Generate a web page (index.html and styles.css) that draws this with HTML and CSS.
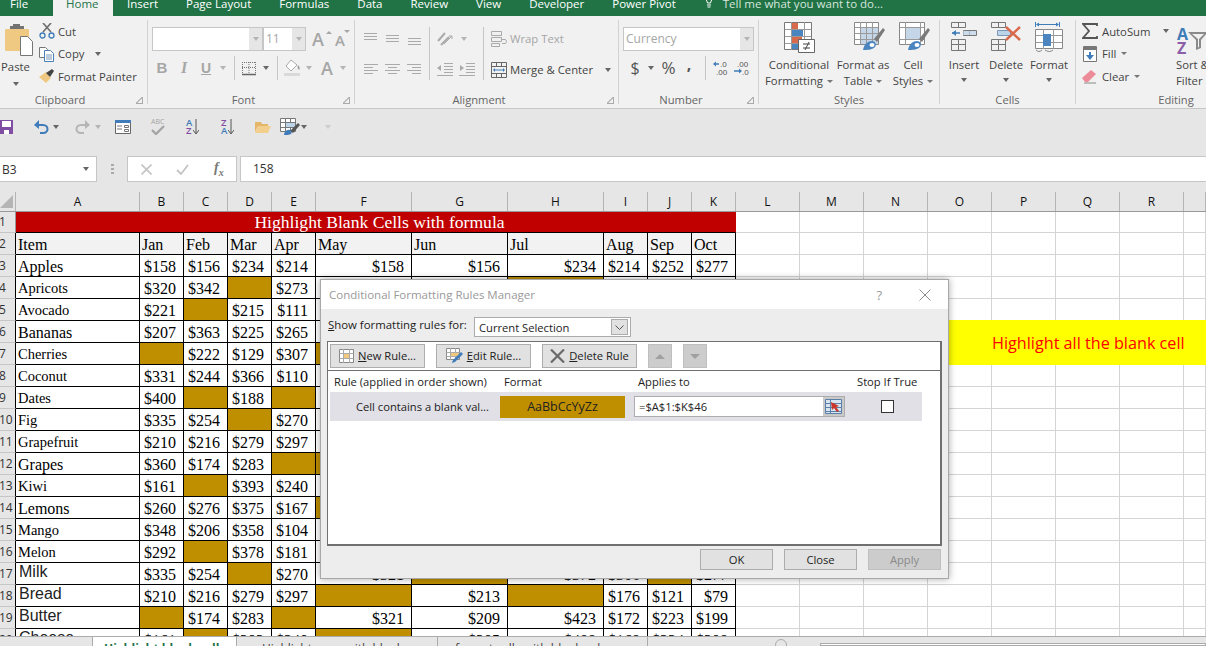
FILE: index.html
```html
<!DOCTYPE html>
<html lang="en">
<head>
<meta charset="UTF-8">
<title>Highlight Blank Cells</title>
<link rel="stylesheet" href="styles.css">
</head>
<body>
<div class="app">
  <!-- tabs -->
  <div class="tabs">
    <span class="tab file">File</span>
    <span class="tab home">Home</span>
    <span class="tab">Insert</span>
    <span class="tab">Page Layout</span>
    <span class="tab">Formulas</span>
    <span class="tab">Data</span>
    <span class="tab">Review</span>
    <span class="tab">View</span>
    <span class="tab">Developer</span>
    <span class="tab">Power Pivot</span>
    <span class="tell">
      <svg width="12" height="16" viewBox="0 0 12 16"><path d="M2 0c0 3 2 4 2.500 7h3C8 4 10 3 10 0M4 9h4M4.500 11h3" fill="none" stroke="#fff"/></svg>
      Tell me what you want to do...
    </span>
  </div>

  <!-- ribbon -->
  <div class="ribbon">
    <div class="grp g-clip">
      <div class="body clip-body">
        <div class="paste">
          <svg width="32" height="33" viewBox="0 0 32 33"><rect x="3" y="6" width="24" height="22" rx="1" fill="#efc981"/><path d="M8 6V3h3V1h7v2h4v3z" fill="#737373"/><path d="M18.500 13.500h7l5 5v14h-12z" fill="#fff" stroke="#767676"/></svg>
          <span class="paste-t">Paste</span>
          <span class="caret"></span>
        </div>
        <div class="clip-rows">
          <div class="clip-row">
            <svg width="16" height="16" viewBox="0 0 16 16"><path d="M4 9 12 0M12 9 4 0" stroke="#6d6d6d" stroke-width="1.600" fill="none"/><circle cx="3.500" cy="12.500" r="2.500" fill="none" stroke="#3f7cb9" stroke-width="1.300"/><circle cx="12.500" cy="12.500" r="2.500" fill="none" stroke="#3f7cb9" stroke-width="1.300"/></svg>
            Cut
          </div>
          <div class="clip-row">
            <svg width="16" height="16" viewBox="0 0 16 16"><path d="M.5 1.500h6l2 2v8h-8z" fill="#fff" stroke="#777"/><path d="M5.500 4.500h6l3 3v8h-9z" fill="#fff" stroke="#4a7fb5"/><path d="M7 9h6M7 11h6M7 13h6" stroke="#7a98b8"/></svg>
            Copy <span class="caret copy-c"></span>
          </div>
          <div class="clip-row">
            <svg width="16" height="16" viewBox="0 0 16 16"><path d="M0 9 7 4l5 6-5 5z" fill="#efc981"/><path d="M7 5 13 1l2 2-4 6z" fill="#444"/></svg>
            Format Painter
          </div>
        </div>
      </div>
      <div class="glabel"><span>Clipboard</span><i class="launch"></i></div>
    </div>

    <div class="grp g-font">
      <div class="body two">
        <div class="r1">
          <div class="combo c-name"><b></b></div>
          <div class="combo c-size"><em>11</em><b></b></div>
          <span class="grow big-a">A<i class="up"></i></span>
          <span class="grow small-a">A<i class="dn"></i></span>
        </div>
        <div class="r2 font-r2">
          <span class="gl bold">B</span>
          <span class="gl ital">I</span>
          <span class="gl und">U</span>
          <span class="caret off"></span>
          <span class="sep"></span>
          <svg width="14" height="15" viewBox="0 0 14 15"><path d="M.5 1v11M7 1v11M13.500 1v11M0 1.500h14M0 6.500h14" stroke="#777" stroke-dasharray="1 1" fill="none"/><path d="M0 13.500h14" stroke="#666" stroke-width="1.500"/></svg>
          <span class="caret"></span>
          <span class="sep"></span>
          <svg width="16" height="18" viewBox="0 0 16 18"><path d="M7 1 2 7l5 5 6-6z" fill="#fff" stroke="#aaa"/><path d="M14 6c2 2 2 4 1 5-1-1-2-3-1-5z" fill="#999"/><path d="M0 14h16v3H0z" fill="#d9d9d9"/></svg>
          <span class="caret off"></span>
          <span class="gl big-gl">A</span>
          <span class="caret off"></span>
        </div>
      </div>
      <div class="glabel"><span>Font</span><i class="launch"></i></div>
    </div>

    <div class="grp g-align">
      <div class="body two align-body">
        <div class="al-col">
          <div class="al-row">
            <svg class="ln" width="15" height="12" viewBox="0 0 15 12"><path d="M1 .5h13M1 3.500h13M1 6.500h13" stroke="#aaa"/></svg>
            <svg class="ln" width="15" height="12" viewBox="0 0 15 12"><path d="M1 2.500h13M1 5.500h13M1 8.500h13" stroke="#aaa"/></svg>
            <svg class="ln" width="15" height="12" viewBox="0 0 15 12"><path d="M1 5.500h13M1 8.500h13M1 11.500h13" stroke="#aaa"/></svg>
          </div>
          <div class="al-row">
            <svg class="ln" width="15" height="12" viewBox="0 0 15 12"><path d="M1 .5h14M1 3.500h9M1 6.500h14M1 9.500h9" stroke="#aaa"/></svg>
            <svg class="ln" width="15" height="12" viewBox="0 0 15 12"><path d="M0 .5h15M3 3.500h9M0 6.500h15M3 9.500h9" stroke="#aaa"/></svg>
            <svg class="ln" width="15" height="12" viewBox="0 0 15 12"><path d="M0 .5h14M5 3.500h9M0 6.500h14M5 9.500h9" stroke="#aaa"/></svg>
          </div>
        </div>
        <span class="vsep"></span>
        <div class="al-col al-mid">
          <div class="al-row">
            <svg width="17" height="16" viewBox="0 0 17 16"><path d="M1 10 8 2M4 14l8-8" stroke="#aaa" stroke-width="2" fill="none"/><path d="M7 13 15 5M15 5h-3M15 5v3" stroke="#aaa" fill="none"/></svg>
            <span class="caret off"></span>
          </div>
          <div class="al-row ind">
            <svg width="16" height="13" viewBox="0 0 16 13"><path d="M7 .5h9M7 3.500h9M7 6.500h9M7 9.500h9M0 12.500h16" stroke="#aaa"/><path d="M0 5l4-3v6z" fill="#aaa"/></svg>
            <svg width="16" height="13" viewBox="0 0 16 13"><path d="M7 .5h9M7 3.500h9M7 6.500h9M7 9.500h9M0 12.500h16" stroke="#aaa"/><path d="M5 5 1 2v6z" fill="#aaa"/></svg>
          </div>
        </div>
        <span class="vsep"></span>
        <div class="al-col al-wrap">
          <div class="al-row off-t">
            <svg width="16" height="16" viewBox="0 0 16 16"><path d="M.5.500h10v4H.5zM.5 6.500h10v4H.5zM.5 12.500h8v3H.5zM11 8.500h3c2 0 2 4 0 4h-3" fill="none" stroke="#aaa"/></svg>
            Wrap Text
          </div>
          <div class="al-row">
            <svg width="16" height="16" viewBox="0 0 16 16"><path d="M.5.500h15v15H.5zM0 4.500h16M0 11.500h16M5.500 0v4M10.500 0v4M5.500 12v4M10.500 12v4" fill="none" stroke="#666"/><path d="M3 8h10" stroke="#3f7cb9"/><path d="M2 8l2-2v4zM14 8l-2-2v4z" fill="#3f7cb9"/></svg>
            Merge &amp; Center <span class="caret merge-c"></span>
          </div>
        </div>
      </div>
      <div class="glabel"><span>Alignment</span><i class="launch"></i></div>
    </div>

    <div class="grp g-num">
      <div class="body two">
        <div class="r1"><div class="combo c-cur"><em>Currency</em><b></b></div></div>
        <div class="r2 num-r2">
          <span class="dollar">$</span>
          <span class="caret"></span>
          <span class="pct">%</span>
          <span class="comma">,</span>
          <span class="sep"></span>
          <svg width="15" height="14" viewBox="0 0 15 14"><path d="M6 3H1" stroke="#3f7cb9" stroke-width="1.500"/><path d="M0 3l3-2.500v5z" fill="#3f7cb9"/><text x="7" y="6" class="dec">.0</text><text x="3" y="13.500" class="dec">.00</text></svg>
          <svg width="15" height="14" viewBox="0 0 15 14"><text x="3" y="6" class="dec">.00</text><path d="M0 10h6" stroke="#3f7cb9" stroke-width="1.500"/><path d="M8 10 5 7.500v5z" fill="#3f7cb9"/><text x="8" y="13.500" class="dec">.0</text></svg>
        </div>
      </div>
      <div class="glabel"><span>Number</span><i class="launch"></i></div>
    </div>

    <div class="grp g-styles">
      <div class="body bigs">
        <div class="bigb w-cf">
          <div class="ico">
            <svg width="31" height="31" viewBox="0 0 31 31"><path d="M.5.500h27v27H.5z" fill="#fff" stroke="#777"/><path d="M.5 7.500h27M.5 14.500h27M.5 21.500h27M7.500 0v28M20.500 0v28" stroke="#999" fill="none"/><path d="M8 1h6v6H8zM8 15h10v6H8z" fill="#d9694b"/><path d="M8 8h11v6H8zM8 22h6v5H8z" fill="#4a85c0"/><path d="M14.500 17.500h16v13h-16z" fill="#fff" stroke="#666"/><path d="M19 22h7M19 26h7M25 20l-4 8" stroke="#444" fill="none"/></svg>
          </div>
          <span>Conditional</span><span>Formatting<i class="caret sm"></i></span>
        </div>
        <div class="bigb w-ft">
          <div class="ico">
            <svg width="31" height="29" viewBox="0 0 31 29"><path d="M.5.500h24v22H.5z" fill="#fff" stroke="#888"/><path d="M6 6h18v16H6z" fill="#c5d6e8"/><path d="M.5 5.500h24M.5 11.500h24M.5 17.500h24M6.500 0v23M12.500 0v23M18.500 0v23" stroke="#999" fill="none"/><path d="M20 17 29 6l2 2-8 12z" fill="#7a7a7a"/><path d="M9 28c1-6 5-9 9-9 3 0 5 3 3 6-3 3-8 3-12 3z" fill="#4a85c0"/><ellipse cx="18" cy="23" rx="2.500" ry="2" fill="#fff"/></svg>
          </div>
          <span>Format as</span><span>Table<i class="caret sm"></i></span>
        </div>
        <div class="bigb w-cs">
          <div class="ico">
            <svg width="31" height="29" viewBox="0 0 31 29"><path d="M.5.500h25v22H.5z" fill="#fff" stroke="#888"/><path d="M7 6h14v11H7z" fill="#c5d6e8"/><path d="M.5 5.500h25M.5 17.500h25M6.500 0v23M21.500 0v23" stroke="#999" fill="none"/><path d="M20 17 29 6l2 2-8 12z" fill="#7a7a7a"/><path d="M9 28c1-6 5-9 9-9 3 0 5 3 3 6-3 3-8 3-12 3z" fill="#4a85c0"/><ellipse cx="18" cy="23" rx="2.500" ry="2" fill="#fff"/></svg>
          </div>
          <span>Cell</span><span>Styles<i class="caret sm"></i></span>
        </div>
      </div>
      <div class="glabel plain"><span>Styles</span></div>
    </div>

    <div class="grp g-cells">
      <div class="body bigs">
        <div class="bigb w-ins">
          <div class="ico">
            <svg width="26" height="29" viewBox="0 0 26 29"><path d="M.5.500h14v5H.5zM7.500 0v5M.5 17.500h14v11H.5zM.5 22.500h14M7.500 17v11M12.500 8.500h13v5h-13zM18.500 8v5" fill="none" stroke="#777"/><path d="M12 9h13v4H12z" fill="#bcd3e8" opacity=".7"/><path d="M1 11h8" stroke="#3f7cb9" stroke-width="1.500"/><path d="M1 11l4-3v6z" fill="#3f7cb9"/></svg>
          </div>
          <span>Insert</span><i class="caret"></i>
        </div>
        <div class="bigb w-del">
          <div class="ico">
            <svg width="30" height="29" viewBox="0 0 30 29"><path d="M.5.500h14v5H.5zM7.500 0v5M.5 17.500h14v11H.5zM.5 22.500h14M7.500 17v11" fill="none" stroke="#777"/><path d="M6.500 8.500h13v5h-13z" fill="#bcd3e8" stroke="#7a98b8"/><path d="M15 5l14 13M29 5 15 18" stroke="#d9694b" stroke-width="2.400"/></svg>
          </div>
          <span>Delete</span><i class="caret"></i>
        </div>
        <div class="bigb w-fmt">
          <div class="ico">
            <svg width="29" height="31" viewBox="0 0 29 31"><path d="M.5 0v5M24.500 0v5M3 2.500h19" stroke="#3f7cb9" fill="none"/><path d="M1 2.500l3-2v4zM24 2.500l-3-2v4z" fill="#3f7cb9"/><path d="M.5 7.500h27v19H.5z" fill="#fff" stroke="#888"/><path d="M.5 13.500h27M.5 20.500h27M8.500 7v20M18.500 7v20" stroke="#999" fill="none"/><path d="M8 12h8v12H8z" fill="#4a85c0"/><path d="M1 28c2 2 4 2 6 0M10 28c3 2 6 2 8 0" stroke="#888" fill="none"/></svg>
          </div>
          <span>Format</span><i class="caret"></i>
        </div>
      </div>
      <div class="glabel plain"><span>Cells</span></div>
    </div>

    <div class="grp g-edit">
      <div class="body edit-body">
        <div class="clip-rows">
          <div class="clip-row ed">
            <svg width="16" height="16" viewBox="0 0 16 16"><path d="M15 3V1H1l6 7-6 7h14v-2" fill="none" stroke="#555" stroke-width="1.800"/></svg>
            AutoSum <span class="caret sum-c"></span>
          </div>
          <div class="clip-row ed">
            <svg width="16" height="16" viewBox="0 0 16 16"><path d="M1.500.5h13v15h-13z" fill="#fff" stroke="#777"/><path d="M1 1h14v3H1z" fill="#777"/><path d="M8 6v6" stroke="#3f7cb9" stroke-width="2"/><path d="M8 14 4 9h8z" fill="#3f7cb9"/></svg>
            Fill <span class="caret sm-c"></span>
          </div>
          <div class="clip-row ed">
            <svg width="16" height="16" viewBox="0 0 16 16"><path d="M0 10 9 2l5 4-8 8H3z" fill="#ec8c99"/><path d="M2 15h12" stroke="#888"/></svg>
            Clear <span class="caret sm-c"></span>
          </div>
        </div>
        <div class="bigb w-sort">
          <div class="ico sort-ico">
            <span class="az-a">A</span><span class="az-z">Z</span>
            <svg width="20" height="18" viewBox="0 0 20 18"><path d="M0 0h20l-7 8v8l-5 2V8z" fill="#8a8a8a"/><path d="M4 2h12l-5 5v8l-1 .5V7z" fill="#f1f1f1"/></svg>
          </div>
          <span>Sort &amp;</span><span>Filter<i class="caret sm"></i></span>
        </div>
      </div>
      <div class="glabel plain"><span>Editing</span></div>
    </div>
  </div>

  <!-- quick access -->
  <div class="qat">
    <svg width="14" height="14" viewBox="0 0 14 14"><path d="M0 0h13v14H0z" fill="#7f4ea3"/><path d="M2 1h9v6H2z" fill="#fff"/><path d="M4 10h5v4H4z" fill="#fff"/></svg>
    <svg width="15" height="14" viewBox="0 0 15 14"><path d="M1 5h8c6 0 6 8 0 8H6" fill="none" stroke="#3f7cb9" stroke-width="2"/><path d="M0 5l5-5v9z" fill="#3f7cb9"/></svg>
    <span class="caret"></span>
    <svg width="15" height="14" viewBox="0 0 15 14"><path d="M14 5H6c-6 0-6 8 0 8h3" fill="none" stroke="#b5b5b5" stroke-width="2"/><path d="M15 5l-5-5v9z" fill="#b5b5b5"/></svg>
    <span class="caret off"></span>
    <svg width="16" height="14" viewBox="0 0 16 14"><path d="M.5.500h15v13H.5z" fill="#fff" stroke="#666"/><path d="M0 0h16v3H0z" fill="#3f7cb9"/><path d="M2 6h5M2 9h5M9.500 5.500h4v2h-4zM9.500 9.500h4v2h-4z" stroke="#777" fill="none"/></svg>
    <span class="abc"><span>ABC</span><svg width="14" height="10" viewBox="0 0 14 10"><path d="M1 5l4 4 8-8" fill="none" stroke="#a5a5a5" stroke-width="2.400"/></svg></span>
    <span class="sorter"><span class="stk"><i class="bl">A</i><i class="pu">Z</i></span><svg width="6" height="16" viewBox="0 0 6 16"><path d="M3 0v14M0 11l3 4 3-4" fill="none" stroke="#555"/></svg></span>
    <span class="sorter"><span class="stk"><i class="pu">Z</i><i class="bl">A</i></span><svg width="6" height="16" viewBox="0 0 6 16"><path d="M3 0v14M0 11l3 4 3-4" fill="none" stroke="#555"/></svg></span>
    <svg width="16" height="13" viewBox="0 0 16 13"><path d="M0 2h6l1 2h6v2H3L0 12z" fill="#e3b66a"/><path d="M3 6h13l-3 7H0z" fill="#f3cf8d"/></svg>
    <svg width="20" height="17" viewBox="0 0 20 17"><path d="M.5.500h15v13H.5zM.5 4.500h15M.5 9.500h15M5.500 0v14M10.500 0v14" fill="#fff" stroke="#777"/><path d="M6 5h9v4H6z" fill="#bcd3e8"/><path d="M10 13 18 5l2 2-7 8z" fill="#555"/><path d="M4 17c0-3 3-6 6-5 2 1 2 3 1 4-2 1-4 1-7 1z" fill="#3f7cb9"/></svg>
    <span class="caret"></span>
    <span class="caret off more"></span>
  </div>

  <!-- formula bar -->
  <div class="fbar">
    <div class="namebox"><span>B3</span><i class="caret"></i></div>
    <span class="dots"></span>
    <div class="fbtns">
      <svg width="11" height="11" viewBox="0 0 11 11"><path d="M.5.500l10 10M10.500.500l-10 10" stroke="#c4c4c4" stroke-width="1.600"/></svg>
      <svg width="13" height="11" viewBox="0 0 13 11"><path d="M1 6l4 4 7-9" fill="none" stroke="#c4c4c4" stroke-width="1.800"/></svg>
      <span class="fx">f<sub>x</sub></span>
    </div>
    <div class="finput">158</div>
  </div>

  <!-- sheet -->
  <div class="sheet">
    <table class="grid">
      <colgroup>
        <col class="cr"><col class="ca"><col class="cs"><col class="cs"><col class="cs"><col class="cs">
        <col class="cw"><col class="cw"><col class="cw"><col class="cs"><col class="cs"><col class="cs">
        <col class="cl"><col class="cl"><col class="cl"><col class="cl"><col class="cl"><col class="cl"><col class="cl"><col class="ce">
      </colgroup>
      <tr class="heads">
        <th class="corner"><div><svg width="13" height="13" viewBox="0 0 13 13"><path d="M13 0v13H0z" fill="#b5b5b5"/></svg></div></th>
        <th><div>A</div></th><th><div>B</div></th><th><div>C</div></th><th><div>D</div></th><th><div>E</div></th><th><div>F</div></th><th><div>G</div></th><th><div>H</div></th><th><div>I</div></th><th><div>J</div></th><th><div>K</div></th><th><div>L</div></th><th><div>M</div></th><th><div>N</div></th><th><div>O</div></th><th><div>P</div></th><th><div>Q</div></th><th><div>R</div></th><th><div></div></th>
      </tr>
      <tr class="r-title"><th>1</th><td class="title" colspan="11">Highlight Blank Cells with formula</td><td></td><td></td><td></td><td></td><td></td><td></td><td></td><td></td></tr>
      <tr class="data hdr"><th>2</th><td class="i">Item</td><td>Jan</td><td>Feb</td><td>Mar</td><td>Apr</td><td>May</td><td>Jun</td><td>Jul</td><td>Aug</td><td>Sep</td><td>Oct</td><td></td><td></td><td></td><td></td><td></td><td></td><td></td><td></td></tr>
      <tr class="data"><th>3</th><td class="i">Apples</td><td>$158</td><td>$156</td><td>$234</td><td>$214</td><td>$158</td><td>$156</td><td>$234</td><td>$214</td><td>$252</td><td>$277</td><td></td><td></td><td></td><td></td><td></td><td></td><td></td><td></td></tr>
      <tr class="data"><th>4</th><td class="i s">Apricots</td><td>$320</td><td>$342</td><td class="b"></td><td>$273</td><td></td><td></td><td class="b"></td><td></td><td></td><td></td><td></td><td></td><td></td><td></td><td></td><td></td><td></td><td></td></tr>
      <tr class="data"><th>5</th><td class="i s">Avocado</td><td>$221</td><td class="b"></td><td>$215</td><td>$111</td><td></td><td></td><td></td><td></td><td></td><td></td><td></td><td></td><td></td><td></td><td></td><td></td><td></td><td></td></tr>
      <tr class="data"><th>6</th><td class="i">Bananas</td><td>$207</td><td>$363</td><td>$225</td><td>$265</td><td></td><td></td><td></td><td></td><td></td><td></td><td></td><td></td><td class="note" colspan="6" rowspan="2">Highlight all the blank cell</td></tr>
      <tr class="data"><th>7</th><td class="i s">Cherries</td><td class="b"></td><td>$222</td><td>$129</td><td>$307</td><td class="b"></td><td></td><td></td><td></td><td></td><td></td><td></td><td></td></tr>
      <tr class="data"><th>8</th><td class="i s">Coconut</td><td>$331</td><td>$244</td><td>$366</td><td>$110</td><td></td><td></td><td></td><td></td><td></td><td></td><td></td><td></td><td></td><td></td><td></td><td></td><td></td><td></td></tr>
      <tr class="data"><th>9</th><td class="i s">Dates</td><td>$400</td><td class="b"></td><td>$188</td><td class="b"></td><td></td><td></td><td></td><td></td><td></td><td></td><td></td><td></td><td></td><td></td><td></td><td></td><td></td><td></td></tr>
      <tr class="data"><th>10</th><td class="i s">Fig</td><td>$335</td><td>$254</td><td class="b"></td><td>$270</td><td></td><td></td><td></td><td></td><td></td><td></td><td></td><td></td><td></td><td></td><td></td><td></td><td></td><td></td></tr>
      <tr class="data"><th>11</th><td class="i s">Grapefruit</td><td>$210</td><td>$216</td><td>$279</td><td>$297</td><td></td><td></td><td></td><td></td><td></td><td></td><td></td><td></td><td></td><td></td><td></td><td></td><td></td><td></td></tr>
      <tr class="data"><th>12</th><td class="i">Grapes</td><td>$360</td><td>$174</td><td>$283</td><td class="b"></td><td class="b"></td><td></td><td></td><td></td><td></td><td></td><td></td><td></td><td></td><td></td><td></td><td></td><td></td><td></td></tr>
      <tr class="data"><th>13</th><td class="i s">Kiwi</td><td>$161</td><td class="b"></td><td>$393</td><td>$240</td><td></td><td></td><td></td><td></td><td></td><td></td><td></td><td></td><td></td><td></td><td></td><td></td><td></td><td></td></tr>
      <tr class="data"><th>14</th><td class="i">Lemons</td><td>$260</td><td>$276</td><td>$375</td><td>$167</td><td class="b"></td><td></td><td></td><td></td><td></td><td></td><td></td><td></td><td></td><td></td><td></td><td></td><td></td><td></td></tr>
      <tr class="data"><th>15</th><td class="i s">Mango</td><td>$348</td><td>$206</td><td>$358</td><td>$104</td><td></td><td></td><td></td><td></td><td></td><td></td><td></td><td></td><td></td><td></td><td></td><td></td><td></td><td></td></tr>
      <tr class="data"><th>16</th><td class="i s">Melon</td><td>$292</td><td class="b"></td><td>$378</td><td>$181</td><td></td><td></td><td></td><td></td><td></td><td></td><td></td><td></td><td></td><td></td><td></td><td></td><td></td><td></td></tr>
      <tr class="data"><th>17</th><td class="i a">Milk</td><td>$335</td><td>$254</td><td class="b"></td><td>$270</td><td>$321</td><td class="b"></td><td>$372</td><td>$306</td><td class="b"></td><td>$277</td><td></td><td></td><td></td><td></td><td></td><td></td><td></td><td></td></tr>
      <tr class="data"><th>18</th><td class="i a">Bread</td><td>$210</td><td>$216</td><td>$279</td><td>$297</td><td class="b"></td><td>$213</td><td class="b"></td><td>$176</td><td>$121</td><td>$79</td><td></td><td></td><td></td><td></td><td></td><td></td><td></td><td></td></tr>
      <tr class="data"><th>19</th><td class="i a">Butter</td><td class="b"></td><td>$174</td><td>$283</td><td class="b"></td><td>$321</td><td>$209</td><td>$423</td><td>$172</td><td>$223</td><td>$199</td><td></td><td></td><td></td><td></td><td></td><td></td><td></td><td></td></tr>
      <tr class="data"><th>20</th><td class="i a">Cheese</td><td>$161</td><td class="b"></td><td>$393</td><td>$240</td><td class="b"></td><td>$305</td><td>$488</td><td>$168</td><td>$234</td><td>$308</td><td></td><td></td><td></td><td></td><td></td><td></td><td></td><td></td></tr>
    </table>
  </div>

  <!-- sheet tabs -->
  <div class="stabs">
    <span class="stab on">Highlight blank cell</span>
    <span class="stab t2">Highlight rows with blank</span>
    <span class="stab t3">format cells with blank values</span>
    <span class="zoomdot"></span>
    <span class="hscroll"></span>
  </div>

  <!-- dialog -->
  <div class="dlg">
    <div class="dlg-title">
      <span>Conditional Formatting Rules Manager</span>
      <span class="q">?</span>
      <svg width="12" height="12" viewBox="0 0 12 12"><path d="M.5.500l11 11M11.500.500l-11 11" stroke="#8a8a8a"/></svg>
    </div>
    <div class="dlg-body">
      <div class="show">
        <span class="show-l"><u>S</u>how formatting rules for:</span>
        <div class="sel"><span>Current Selection</span><b><svg width="9" height="5" viewBox="0 0 9 5"><path d="M.5.500l4 4 4-4" fill="none" stroke="#555"/></svg></b></div>
      </div>
      <div class="panel">
        <div class="tools">
          <button class="tbtn"><svg width="15" height="14" viewBox="0 0 15 14"><path d="M.5.500h14v13H.5z" fill="#fff" stroke="#888"/><path d="M4 4h7v6H4z" fill="#f0c97f"/><path d="M.5 4.500h14M.5 9.500h14M4.500 0v14M10.500 0v14" stroke="#aaa" fill="none"/></svg><span><u>N</u>ew Rule...</span></button>
          <button class="tbtn"><svg width="17" height="16" viewBox="0 0 17 16"><path d="M.5.500h13v11H.5z" fill="#fff" stroke="#888"/><path d="M.5 4.500h13M.5 8.500h13M4.500 0v12M9.500 0v12" stroke="#aaa" fill="none"/><path d="M5 5h8v3H5z" fill="#f0c97f"/><path d="M6 15l1-3 8-8 2 2-8 8z" fill="#3f7cb9"/></svg><span><u>E</u>dit Rule...</span></button>
          <button class="tbtn"><svg width="15" height="14" viewBox="0 0 15 14"><path d="M1 .5l13 13M14 .5l-13 13" stroke="#6a6a6a" stroke-width="2.200"/></svg><span><u>D</u>elete Rule</span></button>
          <button class="abtn"><i class="tri-up"></i></button>
          <button class="abtn"><i class="tri-dn"></i></button>
        </div>
        <div class="rules">
          <div class="rhead">
            <span class="rc1">Rule (applied in order shown)</span>
            <span class="rc2">Format</span>
            <span class="rc3">Applies to</span>
            <span class="rc4">Stop If True</span>
          </div>
          <div class="rrow">
            <span class="rc1 rname">Cell contains a blank val...</span>
            <span class="rfmt">AaBbCcYyZz</span>
            <div class="rref"><span>=$A$1:$K$46</span><b><svg width="17" height="15" viewBox="0 0 17 15"><path d="M.5.500h16v14H.5z" fill="#d8e4f0" stroke="#5a7fa8"/><path d="M0 4.500h17M0 8.500h17M0 12.500h17M5.500 0v15" stroke="#5a7fa8"/><path d="M6 3l8 4-3 1 3 4-2 1-3-4-2 2z" fill="#c9352b"/></svg></b></div>
            <span class="rchk"><i></i></span>
          </div>
        </div>
      </div>
      <div class="foot">
        <button class="fbtn">OK</button>
        <button class="fbtn">Close</button>
        <button class="fbtn dis">Apply</button>
      </div>
    </div>
  </div>
</div>
</body>
</html>
```

FILE: styles.css
```css
*{
    margin: 0;
    padding: 0;
    box-sizing: border-box;
}
html,body{
    width: 1206px;
    height: 646px;
    overflow: hidden;
    background: #fff;
    font-family: "Open Sans", "Noto Sans", sans-serif;
    font-size: 11.300px;
    color: #444;
}
.app{
    position: relative;
    width: 1206px;
    height: 646px;
    display: flex;
    flex-direction: column;
    overflow: hidden;
}
i,em{
    font-style: normal;
}

/* tabs */
.tabs{
    height: 16px;
    flex: none;
    background: #217346;
    color: #fff;
    display: flex;
    line-height: 8px;
    font-size: 11.500px;
    overflow: hidden;
}
.tab{
    padding: 0 14px;
    white-space: nowrap;
}
.tab.file{
    padding: 0 10px;
    width: 53px;
}
.tab.home{
    background: #f1f1f1;
    color: #217346;
    width: 60px;
    padding: 0 13px;
}
.tell{
    margin-left: 13px;
    display: flex;
    gap: 8px;
    color: #d6e6dc;
    white-space: nowrap;
}
.tell svg{
    margin-top: -4px;
}

/* ribbon */
.ribbon{
    height: 93px;
    flex: none;
    background: #f1f1f1;
    border-bottom: 1px solid #c6c6c6;
    display: flex;
    overflow: hidden;
}
.grp{
    margin-top: 4px;
    height: 84px;
    flex: none;
    border-right: 1px solid #d2d2d2;
}
.g-clip{ width: 148px; }
.g-font{ width: 207px; }
.g-align{ width: 264px; }
.g-num{ width: 140px; }
.g-styles{ width: 181px; }
.g-cells{ width: 136px; }
.g-edit{ width: 200px; border: 0; }
.body{
    height: 72px;
}
.glabel{
    display: flex;
    height: 12px;
    line-height: 16px;
    color: #666;
    font-size: 11.200px;
    align-items: flex-start;
}
.glabel span{
    flex: 1;
    text-align: center;
    padding-right: 4px;
}
.glabel.plain span{
    padding-right: 0;
}
.launch{
    width: 7px;
    height: 7px;
    margin: 5px 4px 0 0;
    border-right: 1px solid #aaa;
    border-bottom: 1px solid #aaa;
    background: linear-gradient(135deg, #f1f1f1 45%, #bbb 45%, #bbb 60%, #f1f1f1 60%);
}
.g-clip .glabel span{
    flex: none;
    width: 120px;
    padding: 0;
}
.g-clip .launch{
    margin-left: 16px;
}
.caret{
    display: inline-block;
    width: 0;
    height: 0;
    flex: none;
    border-left: 3.5px solid transparent;
    border-right: 3.5px solid transparent;
    border-top: 4px solid #666;
}
.caret.off{
    border-top-color: #b4b4b4;
}
.caret.sm{
    margin-left: 4px;
    vertical-align: 2px;
    border-left-width: 3px;
    border-right-width: 3px;
    border-top-width: 3px;
    border-top-color: #777;
}

/* clipboard */
.clip-body{
    display: flex;
}
.paste{
    width: 35px;
    flex: none;
    display: flex;
    flex-direction: column;
    align-items: center;
    padding-top: 3px;
}
.paste-t{
    margin-top: 3px;
    line-height: 16px;
    height: 18px;
    margin-left: -4px;
}
.paste .caret{
    margin: 5px 0 0 -4px;
}
.clip-rows{
    display: flex;
    flex-direction: column;
    padding-left: 4px;
}
.clip-row{
    height: 22.500px;
    display: flex;
    align-items: center;
    gap: 3px;
    white-space: nowrap;
}
.clip-row svg{
    flex: none;
}
.copy-c{
    margin-left: 8px;
}

/* font + number */
.r1{
    display: flex;
    align-items: center;
    padding: 7px 0 0 4px;
    height: 31px;
}
.combo{
    height: 24px;
    background: #fff;
    border: 1px solid #c6c6c6;
    display: flex;
}
.combo em{
    color: #a6a6a6;
    line-height: 22px;
    padding-left: 2px;
    font-size: 12px;
}
.combo b{
    width: 13px;
    margin-left: auto;
    background: #e6e6e6;
    display: flex;
    align-items: center;
    justify-content: center;
}
.combo b::after{
    content: "";
    border-left: 3.5px solid transparent;
    border-right: 3.5px solid transparent;
    border-top: 4px solid #b4b4b4;
}
.c-name{ width: 111px; }
.c-size{ width: 43px; }
.c-cur{ width: 131px; }
.grow{
    position: relative;
    color: #a6a6a6;
    font-weight: 600;
    line-height: 20px;
}
.big-a{
    font-size: 18px;
    margin-left: 6px;
    width: 23px;
}
.small-a{
    font-size: 15px;
    width: 14px;
    padding-top: 2px;
}
.up,.dn{
    position: absolute;
    top: 2px;
    right: 3px;
    border-left: 3px solid transparent;
    border-right: 3px solid transparent;
}
.up{ border-bottom: 3px solid #a6a6a6; }
.dn{ border-top: 3px solid #a6a6a6; right: -1px; }
.r2{
    display: grid;
    align-items: center;
    justify-items: center;
    height: 34px;
}
.font-r2{
    padding-left: 3px;
    grid-template-columns: 22px 22px 22px 12px 10px 20px 13px 10px 20px 14px 22px 10px;
}
.num-r2{
    padding-left: 8px;
    grid-template-columns: 16px 15px 21px 20px 12px 18px 24px;
}
.sep,.vsep{
    width: 1px;
    height: 24px;
    background: #c6c6c6;
}
.gl{
    color: #a6a6a6;
    font-size: 14px;
    line-height: 20px;
}
.bold{ font-weight: 700; font-family: "Liberation Sans", sans-serif; font-size: 15px; }
.ital{ font-style: italic; font-family: "Liberation Serif", serif; font-size: 16px; font-weight: 700; }
.und{ font-weight: 700; text-decoration: underline; font-family: "Liberation Sans", sans-serif; }
.big-gl{ font-size: 18px; font-weight: 600; }
.dollar,.pct{
    color: #555;
    font-size: 16px;
    line-height: 20px;
}
.pct{ font-size: 17px; }
.comma{
    color: #555;
    font-size: 16px;
    font-weight: 700;
    line-height: 12px;
    height: 20px;
}
.dec{
    font-family: "Liberation Sans", sans-serif;
    font-size: 8px;
    fill: #555;
}

/* alignment */
.align-body{
    display: flex;
    align-items: flex-start;
}
.al-col{
    height: 70px;
    padding-top: 3px;
    display: flex;
    flex-direction: column;
}
.al-col:first-child{
    width: 74px;
    padding-left: 8px;
    flex: none;
}
.al-row{
    height: 31px;
    display: flex;
    align-items: center;
    gap: 7px;
    white-space: nowrap;
}
.al-col .ln{
    flex: none;
}
.vsep{
    margin-top: 7px;
    height: 53px;
    flex: none;
}
.al-mid{
    width: 53px;
    padding-left: 7px;
    flex: none;
}
.ind{
    gap: 6px;
}
.al-wrap{
    padding-left: 7px;
}
.al-row.off-t{
    color: #a6a6a6;
}
.al-wrap .al-row{
    gap: 3px;
}
.merge-c{
    margin-left: 9px;
}

/* big buttons */
.bigs{
    display: flex;
}
.g-styles .bigs{
    padding-left: 6px;
    gap: 4px;
}
.bigb{
    display: flex;
    flex-direction: column;
    align-items: center;
    white-space: nowrap;
    line-height: 16px;
    padding-top: 2px;
}
.ico{
    height: 35px;
}
.w-cf{ width: 68px; }
.w-ft{ width: 52px; }
.w-cs{ width: 40px; }
.w-ins{ width: 48px; }
.w-del{ width: 36px; }
.w-fmt{ width: 50px; }
.bigb > i.caret{
    margin-top: 5px;
}
.w-ft .ico{ margin-left: 12px; }
.w-cs .ico{ margin-left: 3px; }

/* editing */
.edit-body{
    display: flex;
}
.clip-row.ed{
    width: 93px;
    gap: 4px;
    padding-left: 3px;
}
.g-edit .clip-rows{
    padding-left: 3px;
}
.sum-c{
    margin-left: 9px;
}
.sm-c{
    margin-left: 1px;
    border-left-width: 3px;
    border-right-width: 3px;
    border-top-width: 3px;
    border-top-color: #777;
}
.w-sort{
    margin-left: 4px;
    align-items: flex-start;
}
.sort-ico{
    display: flex;
    position: relative;
    width: 32px;
    justify-content: flex-end;
    padding-top: 10px;
}
.az-a,.az-z{
    position: absolute;
    left: 1px;
    font-weight: 700;
    font-size: 16px;
    line-height: 14px;
}
.az-a{ top: 5px; color: #3f7cb9; }
.az-z{ top: 19px; color: #8a5ea8; }

/* qat */
.qat{
    height: 47px;
    flex: none;
    background: #e6e6e6;
    display: grid;
    grid-template-columns: 34px 19px 22px 20px 20px 36px 35px 35px 34px 25px 21px 24px 10px;
    align-items: center;
    justify-items: start;
    padding-bottom: 12px;
}
.abc{
    display: flex;
    flex-direction: column;
    font-size: 7px;
    line-height: 7px;
    color: #a5a5a5;
}
.sorter{
    display: flex;
    align-items: center;
    gap: 1px;
}
.stk{
    display: flex;
    flex-direction: column;
    font-size: 9.500px;
    line-height: 8px;
    font-weight: 600;
}
.bl{ color: #3f7cb9; }
.pu{ color: #7f4ea3; }
.more{
    opacity: .5;
}

/* formula bar */
.fbar{
    height: 26px;
    flex: none;
    background: #e6e6e6;
    display: flex;
    font-size: 12px;
}
.namebox{
    width: 97px;
    background: #fff;
    border: 1px solid #c6c6c6;
    border-left: 0;
    display: flex;
    align-items: center;
    justify-content: space-between;
    padding: 0 7px 0 2px;
    color: #333;
}
.dots{
    width: 3px;
    height: 11px;
    margin: 8px 13px 0 14px;
    background: repeating-linear-gradient(#aaa 0 2px, transparent 2px 4px);
}
.fbtns{
    width: 110px;
    background: #fff;
    border: 1px solid #c6c6c6;
    display: flex;
    align-items: center;
    padding-left: 13px;
    gap: 24px;
}
.fx{
    font-family: "Liberation Serif", serif;
    font-style: italic;
    font-weight: 700;
    font-size: 14px;
    color: #777;
    margin-left: 1px;
}
.fx sub{
    font-size: 10px;
}
.finput{
    flex: 1;
    margin-left: 3px;
    background: #fff;
    border-top: 1px solid #c6c6c6;
    border-bottom: 1px solid #c6c6c6;
    border-left: 1px solid #c6c6c6;
    padding-left: 12px;
    line-height: 24px;
    color: #333;
}

/* sheet */
.sheet{
    flex: 1;
    min-height: 0;
    overflow: hidden;
}
.grid{
    table-layout: fixed;
    width: 1206px;
    border-collapse: separate;
    border-spacing: 0;
}
.cr{ width: 16px; }
.ca{ width: 124px; }
.cs{ width: 44px; }
.cw{ width: 96px; }
.cl{ width: 64px; }
.ce{ width: 22px; }
.grid td{
    height: 22px;
    padding: 0;
    border-right: 1px solid #d4d4d4;
    border-bottom: 1px solid #d4d4d4;
    overflow: hidden;
    white-space: nowrap;
    font-family: "Liberation Serif", serif;
    font-size: 16px;
    line-height: 19px;
    color: #000;
    vertical-align: bottom;
}
.grid th{
    font-weight: 400;
    background: #e6e6e6;
    color: #333;
    font-size: 12px;
    text-align: left;
    text-indent: -1px;
    border-right: 1px solid #000;
    border-bottom: 1px solid #c6c6c6;
    overflow: hidden;
    line-height: 20px;
    white-space: nowrap;
}
.grid .heads th{
    height: 30px;
    padding: 10px 0 0;
    border-right: 0;
    border-bottom: 1px solid #9a9a9a;
    text-align: center;
    text-indent: 0;
    color: #111;
}
.heads th div{
    height: 19px;
    line-height: 19px;
    border-right: 1px solid #b4b4b4;
}
.heads .corner div{
    padding-top: 3px;
}
.corner div svg{
    display: block;
}
.grid .r-title th{
    border-right: 1px solid #9a9a9a;
}
.r-title td{
    height: 21px;
}
.grid td.title{
    background: #c00000;
    color: #fff;
    text-align: center;
    font-size: 17.600px;
    padding-left: 8px;
    border-right: 1px solid #c00000;
    border-bottom: 1px solid #000;
    line-height: 20px;
}
.data td:nth-of-type(-n+11){
    border-right-color: #000;
    border-bottom-color: #000;
    text-align: right;
    padding-right: 7px;
}
.data.hdr td:nth-of-type(-n+11){
    background: #f2f2f2;
    text-align: left;
    padding: 0 0 0 2px;
}
.data td.i:nth-of-type(1){
    text-align: left;
    padding: 0 0 0 2px;
}
.data td.s{
    font-size: 14.500px;
}
.data td.a:nth-of-type(1){
    font-family: "Liberation Sans", sans-serif;
    vertical-align: top;
    line-height: 17px;
    color: #222;
    padding-left: 3px;
}
.data td.b:nth-of-type(n){
    background: #bf8f00;
}
.grid td.note{
    background: #ffff00;
    box-shadow: 0 -1px 0 #ffff00;
    color: #ff0000;
    font-family: "Open Sans", sans-serif;
    font-size: 16.200px;
    padding-left: 128px;
    vertical-align: middle;
    border: 0;
}

/* sheet tabs */
.stabs{
    height: 10px;
    flex: none;
    background: #e6e6e6;
    border-top: 1px solid #ababab;
    display: flex;
    overflow: hidden;
    font-size: 12px;
    line-height: 24px;
    white-space: nowrap;
    color: #444;
    position: relative;
}
.stab{
    padding-left: 25px;
    width: 201px;
    border-right: 1px solid #ababab;
    overflow: hidden;
}
.stab.on{
    margin-left: 92px;
    width: 145px;
    padding-left: 11px;
    background: #fff;
    color: #217346;
    font-weight: 700;
    border-left: 1px solid #ababab;
}
.stab.t3{
    width: 210px;
    padding-left: 17px;
}
.zoomdot{
    width: 12px;
    height: 12px;
    margin: 2px 0 0 127px;
    border: 1px solid #ababab;
    border-radius: 50%;
    flex: none;
}
.hscroll{
    margin: 6px 0 0 33px;
    flex: 1;
    background: #fff;
    border: 1px solid #ababab;
}

/* dialog */
.dlg{
    position: absolute;
    left: 320px;
    top: 279px;
    width: 629px;
    height: 300px;
    background: #ededed;
    border: 1px solid #a8a8a8;
    box-shadow: 0 0 7px rgba(0,0,0,.35);
    display: flex;
    flex-direction: column;
    font-size: 11.200px;
    color: #222;
}
.dlg-title{
    height: 29px;
    flex: none;
    background: #fff;
    display: flex;
    align-items: center;
    padding: 0 17px 0 8px;
    color: #9a9a9a;
    font-size: 11.500px;
}
.dlg-title span:first-child{
    flex: 1;
}
.q{
    margin-right: 37px;
    font-size: 13px;
}
.dlg-body{
    flex: 1;
    padding: 8px 6px 0;
    display: flex;
    flex-direction: column;
}
.show{
    display: flex;
    height: 20px;
}
.show-l{
    width: 147px;
    padding-left: 1px;
    font-size: 11.400px;
    line-height: 15px;
    white-space: nowrap;
}
.sel{
    width: 157px;
    height: 20px;
    background: #fff;
    border: 1px solid #ababab;
    display: flex;
    justify-content: space-between;
    align-items: center;
    padding: 0 2px 0 4px;
}
.sel b{
    width: 17px;
    height: 16px;
    background: #e1e1e1;
    border: 1px solid #ababab;
    display: flex;
    align-items: center;
    justify-content: center;
}
.panel{
    margin-top: 4px;
    height: 205px;
    background: #fff;
    border: 1px solid #707070;
    border-width: 1px 2px 2px 1px;
    display: flex;
    flex-direction: column;
}
.tools{
    height: 29px;
    flex: none;
    display: flex;
    gap: 11px;
    padding: 2px 0 0 2px;
    border-bottom: 1px solid #707070;
}
button{
    font-family: inherit;
    font-size: 11.200px;
    color: #222;
}
.tbtn{
    width: 95px;
    height: 24px;
    background: #e1e1e1;
    border: 1px solid #adadad;
    display: flex;
    align-items: center;
    justify-content: center;
    gap: 4px;
    line-height: 20px;
}
.abtn{
    width: 24px;
    height: 24px;
    background: #cccccc;
    border: 1px solid #bfbfbf;
    display: flex;
    align-items: center;
    justify-content: center;
}
.tri-up,.tri-dn{
    border-left: 5px solid transparent;
    border-right: 5px solid transparent;
}
.tri-up{ border-bottom: 5px solid #a0a0a0; }
.tri-dn{ border-top: 5px solid #a0a0a0; }
.rules{
    flex: 1;
    padding-left: 2px;
}
.rhead{
    height: 21px;
    display: flex;
    align-items: center;
    width: 592px;
    background: #fff;
}
.rhead span{
    padding-left: 4px;
    white-space: nowrap;
}
.rc1{ width: 170px; }
.rc2{ width: 134px; }
.rc3{ width: 223px; }
.rhead .rc4{ padding-left: 0; }
.rrow{
    height: 29px;
    width: 592px;
    background: #e0e0e6;
    display: flex;
    align-items: center;
}
.rname{
    text-align: right;
    padding-right: 11px;
    white-space: nowrap;
}
.rfmt{
    width: 125px;
    height: 22px;
    background: #bf8f00;
    text-align: center;
    line-height: 22px;
    font-size: 12.500px;
}
.rref{
    margin-left: 9px;
    width: 211px;
    height: 21px;
    background: #fff;
    border: 1px solid #adadad;
    display: flex;
    justify-content: space-between;
    padding-left: 4px;
    line-height: 19px;
    flex: none;
}
.rref b{
    width: 21px;
    background: #c9c9c9;
    display: flex;
    align-items: center;
    justify-content: center;
}
.rchk{
    flex: 1;
    display: flex;
    justify-content: center;
    padding-left: 7px;
}
.rchk i{
    width: 13px;
    height: 13px;
    background: #fff;
    border: 1px solid #333;
}
.foot{
    margin-top: 3px;
    display: flex;
    justify-content: flex-end;
    gap: 11px;
    padding-right: 1px;
}
.fbtn{
    width: 73px;
    height: 21px;
    background: #e1e1e1;
    border: 1px solid #adadad;
}
.fbtn.dis{
    background: #cccccc;
    border-color: #bfbfbf;
    color: #8a8a8a;
}
```
